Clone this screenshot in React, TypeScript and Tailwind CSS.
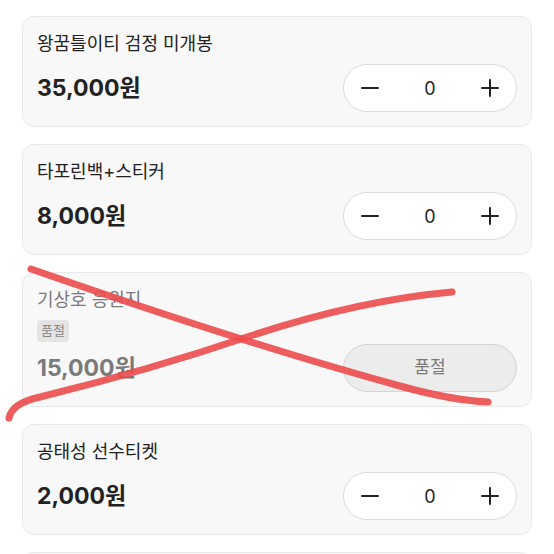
import React from 'react';

type Item = { id: number; name: string; price: number; soldOut?: boolean };

const items: Item[] = [
  { id: 1, name: '왕꿈틀이티 검정 미개봉', price: 35000 },
  { id: 2, name: '타포린백+스티커', price: 8000 },
  { id: 3, name: '기상호 응원지', price: 15000, soldOut: true },
  { id: 4, name: '공태성 선수티켓', price: 2000 },
];

const Stepper = () => (
  <div className="flex h-12 w-[174px] items-center justify-between rounded-full border border-[#dcdcdc] bg-white px-[17px]">
    <svg width="18" height="18" viewBox="0 0 18 18">
      <path d="M1 9h16" stroke="#222" strokeWidth="2" strokeLinecap="round" />
    </svg>
    <span className="text-[18px] text-[#222]">0</span>
    <svg width="18" height="18" viewBox="0 0 18 18">
      <path d="M1 9h16M9 1v16" stroke="#222" strokeWidth="2" strokeLinecap="round" />
    </svg>
  </div>
);

export default function App() {
  return (
    <div className="relative h-[554px] overflow-hidden bg-white font-['Inter','Noto_Sans_CJK_KR',sans-serif]">
      <div className="flex flex-col gap-[17px] px-[22px] pt-4">
        {items.map((it) => (
          <div
            key={it.id}
            className="rounded-xl border border-[#e8e8e8] bg-[#f8f8f8] px-[14px] pt-[15px] pb-[14px]"
          >
            <p className={`text-[18px] leading-6 ${it.soldOut ? 'text-[#7b7b7b]' : 'text-[#222]'}`}>
              {it.name}
            </p>
            {it.soldOut && (
              <span className="mt-2 inline-flex h-[22px] items-center rounded-sm bg-[#e4e4e4] px-1 text-[13px] text-[#858585]">
                품절
              </span>
            )}
            <div className={`flex h-12 items-center justify-between ${it.soldOut ? 'mt-0.5' : 'mt-2'}`}>
              <p className={`text-[23px] font-bold ${it.soldOut ? 'text-[#7a7a7a]' : 'text-[#222]'}`}>
                {it.price.toLocaleString()}원
              </p>
              {it.soldOut ? (
                <div className="flex h-12 w-[174px] items-center justify-center rounded-full border border-[#d4d4d4] bg-[#ececec] text-[17px] text-[#7a7a7a]">
                  품절
                </div>
              ) : (
                <Stepper />
              )}
            </div>
          </div>
        ))}
        {/* next card, only its top edge is in view */}
        <div className="h-24 rounded-xl border border-[#e8e8e8] bg-[#f8f8f8]" />
      </div>

      {/* hand-drawn cross over the sold out card */}
      <svg className="pointer-events-none absolute inset-0" width="554" height="554" viewBox="0 0 554 554">
        <g fill="none" stroke="#ec4b4d" strokeOpacity="0.9" strokeWidth="7" strokeLinecap="round">
          <path d="M31 269 Q 250 345 400 386 Q 450 400 488 402" />
          <path d="M9 418 Q 12 403 40 397 Q 150 370 250 336 Q 360 300 452 292" />
        </g>
      </svg>
    </div>
  );
}
